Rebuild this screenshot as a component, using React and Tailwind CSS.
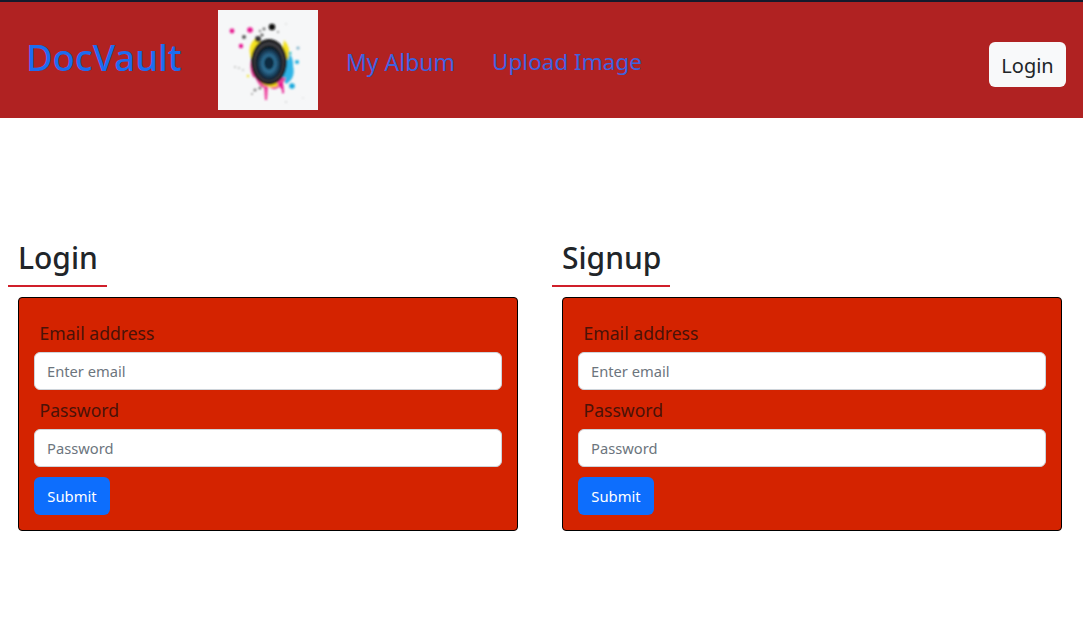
import React from "react";

const font = { fontFamily: '"Noto Sans", "Open Sans", sans-serif' };

function Logo() {
  const splats = [
    [14, 21, 2.4, "#e6178f"], [32, 20, 2.8, "#e6178f"], [23, 36, 2.2, "#e6178f"],
    [26, 27, 2, "#555"], [54, 17, 3.2, "#111"], [46, 19, 1.4, "#666"], [42, 21, 1.2, "#888"], [60, 22, 1, "#888"],
    [40, 29, 3, "#333"], [44, 25, 1.6, "#555"], [80, 38, 1.6, "#7db0c8"], [79, 52, 2, "#23aee0"], [74, 76, 2.8, "#18a8dc"],
    [72, 43, 1.6, "#27c0c8"], [17, 57, 1, "#bbb"], [21, 58, 1, "#bbb"], [25, 60, 0.9, "#bbb"], [37, 80, 1.6, "#888"],
    [42, 78, 1.6, "#777"], [34, 84, 1, "#999"], [68, 92, 0.8, "#bbb"], [85, 88, 0.7, "#ccc"], [68, 14, 0.8, "#ccc"],
    [30, 66, 1.2, "#f4e21c"], [65, 82, 1.2, "#e6178f"],
  ];
  return (
    <svg viewBox="0 0 100 100" className="w-[100px] h-[100px] shrink-0 bg-[#f6f7f8]">
      <defs>
        <radialGradient id="lens" cx="50%" cy="52%" r="50%">
          <stop offset="0%" stopColor="#123a57" />
          <stop offset="45%" stopColor="#2f7299" />
          <stop offset="75%" stopColor="#173a55" />
          <stop offset="100%" stopColor="#0b1118" />
        </radialGradient>
        <filter id="soft"><feGaussianBlur stdDeviation="0.8" /></filter>
      </defs>
      <g filter="url(#soft)">
        <path d="M40 27 Q30 32 32 44 Q33 52 38 56 L46 40 Z" fill="#f4e21c" />
        <path d="M33 50 Q31 62 36 68 L42 60 Z" fill="#ee3f9c" />
        <path d="M64 38 Q76 44 75 56 Q78 68 68 74 L62 66 Z" fill="#2db4e6" />
        <path d="M66 30 Q74 38 70 50 L64 44 Z" fill="#f4e21c" />
        <path d="M36 64 Q42 82 51 77 Q60 84 68 68 Z" fill="#ee3f9c" />
        <path d="M42 72 Q50 80 60 76 L58 68 Z" fill="#f6d90e" />
        <path d="M46 76 L47 90 L49 90 L50 76 Z" fill="#ee3f9c" />
        <path d="M60 74 L66 83 L65 72 Z" fill="#e6178f" />
        <ellipse cx="51" cy="52" rx="18" ry="23" fill="#161618" />
        <ellipse cx="51" cy="52" rx="15.5" ry="20" fill="#3d3e42" />
        <ellipse cx="51" cy="53" rx="13.5" ry="17.5" fill="url(#lens)" />
        <ellipse cx="51" cy="53" rx="5" ry="6.5" fill="#0d2a40" />
        {splats.map(([x, y, r, c], i) => (
          <circle key={i} cx={x} cy={y} r={r} fill={c} />
        ))}
      </g>
    </svg>
  );
}

function Card({ title, headClass }) {
  return (
    <section className="w-[544px] shrink-0">
      <h2 className={`text-[30px] leading-[38px] font-medium text-[#212529] pl-[10px] pt-[1px] pb-[8px] border-b-2 border-[#d01f2a] ${headClass}`}>
        {title}
      </h2>
      <form className="ml-[10px] mt-[10px] w-[500px] h-[234px] bg-[#d42300] border border-black rounded-[4px] px-[15px] pt-[22px]">
        <label className="block pl-[5.5px] text-[17.6px] leading-[27px] text-[#4a1208]">Email address</label>
        <div className="mt-[5px] h-[38px] bg-white border border-[#ced4da] rounded-[6px] pl-[12px] flex items-center text-[14.7px] text-[#6c757d]">
          Enter email
        </div>
        <label className="block mt-[7px] pl-[5.5px] text-[17.6px] leading-[27px] text-[#4a1208]">Password</label>
        <div className="mt-[5px] h-[38px] bg-white border border-[#ced4da] rounded-[6px] pl-[12px] flex items-center text-[14.7px] text-[#6c757d]">
          Password
        </div>
        <button type="button" className="block mt-[10px] w-[76px] h-[38px] bg-[#0d6efd] rounded-[6px] text-white text-[14.8px]">
          Submit
        </button>
      </form>
    </section>
  );
}

export default function App() {
  return (
    <div style={font} className="w-[1083px] h-[623px] bg-white overflow-hidden">
      <nav className="h-[118px] bg-[#b02222] border-t-2 border-[#141a2c] flex items-center pl-[26px] pr-[17px]">
        <a className="text-[36.4px] font-medium leading-none text-[#1c6cf0] w-[192px] shrink-0 -mt-[6px]">DocVault</a>
        <Logo />
        <a className="ml-[28px] text-[23px] text-[#3d62e0] mt-[4px]">My Album</a>
        <a className="ml-[37px] text-[22.5px] text-[#3d62e0] mt-[4px]">Upload Image</a>
        <button type="button" className="ml-auto mt-[8px] w-[77px] h-[45px] pt-[3px] bg-[#f8f9fa] rounded-[6px] text-[20px] text-[#212529]">Login</button>
      </nav>
      <main className="flex pl-[8px] pt-[120px]">
        <Card title="Login" headClass="w-[99px]" />
        <Card title="Signup" headClass="w-[118px]" />
      </main>
    </div>
  );
}
